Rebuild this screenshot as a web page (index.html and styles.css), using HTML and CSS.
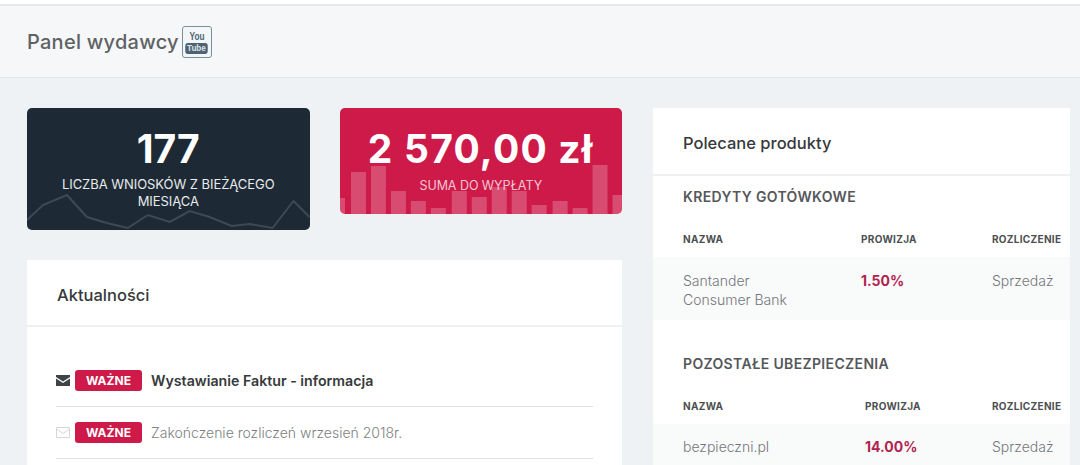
FILE: index.html
```html
<!DOCTYPE html>
<html lang="pl">
<head>
    <meta charset="UTF-8">
    <meta name="viewport" content="width=device-width, initial-scale=1.0">
    <title>Panel wydawcy</title>
    <link rel="stylesheet" href="styles.css">
</head>
<body>
    <div class="top-strip"></div>
    <header class="page-header">
        <h1>Panel wydawcy</h1>
        <a class="yt-button" href="#" aria-label="YouTube">
            <span class="yt-you">You</span>
            <span class="yt-tube">Tube</span>
        </a>
    </header>

    <main class="content">
        <div class="left-column">
            <div class="stats">
                <div class="stat-card stat-dark">
                    <svg class="stat-chart" viewBox="0 0 283 122" preserveAspectRatio="none">
                        <polyline points="0,112 16,97 40,87 60,109 80,115 101,120 121,107 143,114 163,103 183,109 205,118 223,116 246,120 267,93 283,109" fill="none" stroke="#3d4a55" stroke-width="2"/>
                    </svg>
                    <div class="stat-value">177</div>
                    <div class="stat-label">LICZBA WNIOSKÓW Z BIEŻĄCEGO MIESIĄCA</div>
                </div>
                <div class="stat-card stat-red">
                    <svg class="stat-chart" viewBox="0 0 283 106" preserveAspectRatio="none">
                        <g fill="#fff" fill-opacity="0.22">
                            <rect x="0" y="90" width="5" height="16"/>
                            <rect x="11" y="64" width="15" height="42"/>
                            <rect x="31" y="58" width="15" height="48"/>
                            <rect x="51" y="83" width="15" height="23"/>
                            <rect x="71" y="93" width="15" height="13"/>
                            <rect x="91" y="100" width="15" height="6"/>
                            <rect x="112" y="83" width="15" height="23"/>
                            <rect x="132" y="89" width="15" height="17"/>
                            <rect x="152" y="79" width="15" height="27"/>
                            <rect x="172" y="83" width="15" height="23"/>
                            <rect x="192" y="97" width="15" height="9"/>
                            <rect x="213" y="93" width="15" height="13"/>
                            <rect x="233" y="100" width="15" height="6"/>
                            <rect x="253" y="57" width="15" height="49"/>
                            <rect x="273" y="87" width="10" height="19"/>
                        </g>
                    </svg>
                    <div class="stat-value">2 570,00 zł</div>
                    <div class="stat-label">SUMA DO WYPŁATY</div>
                </div>
            </div>

            <section class="panel news">
                <h2 class="panel-title">Aktualności</h2>
                <ul class="news-list">
                    <li class="news-item unread">
                        <svg class="mail-icon" viewBox="0 0 14 11">
                            <path d="M0 0h14v2L7 6.5 0 2z" fill="#3f4347"/>
                            <path d="M0 3.4 7 8l7-4.6V11H0z" fill="#3f4347"/>
                        </svg>
                        <span class="badge">WAŻNE</span>
                        <a href="#">Wystawianie Faktur - informacja</a>
                    </li>
                    <li class="news-item">
                        <svg class="mail-icon" viewBox="0 0 14 11">
                            <path d="M.5.5h13v10H.5z" fill="none" stroke="#d4d6d8"/>
                            <path d="M.5 2 7 6.5 13.500 2" fill="none" stroke="#d4d6d8"/>
                        </svg>
                        <span class="badge">WAŻNE</span>
                        <a href="#">Zakończenie rozliczeń wrzesień 2018r.</a>
                    </li>
                </ul>
            </section>
        </div>

        <section class="panel products">
            <h2 class="panel-title">Polecane produkty</h2>

            <div class="product-group group-first">
                <h3>KREDYTY GOTÓWKOWE</h3>
                <div class="product-row product-head">
                    <div class="col-name">NAZWA</div>
                    <div class="col-rate">PROWIZJA</div>
                    <div class="col-type">ROZLICZENIE</div>
                </div>
                <div class="product-row product-body">
                    <div class="col-name">Santander<br>Consumer Bank</div>
                    <div class="col-rate rate">1.50%</div>
                    <div class="col-type">Sprzedaż</div>
                </div>
            </div>

            <div class="product-group group-second">
                <h3>POZOSTAŁE UBEZPIECZENIA</h3>
                <div class="product-row product-head">
                    <div class="col-name">NAZWA</div>
                    <div class="col-rate">PROWIZJA</div>
                    <div class="col-type">ROZLICZENIE</div>
                </div>
                <div class="product-row product-body">
                    <div class="col-name">bezpieczni.pl</div>
                    <div class="col-rate rate">14.00%</div>
                    <div class="col-type">Sprzedaż</div>
                </div>
            </div>
        </section>
    </main>
</body>
</html>
```

FILE: styles.css
```css
html, body {
    height: 100%;
}
body {
    margin: 0;
    overflow: hidden;
    background-color: #eff2f4;
    font-family: Inter, "Noto Sans", sans-serif;
    color: #3c4043;
}
h1, h2, h3, ul {
    margin: 0;
    padding: 0;
}
a {
    color: inherit;
    text-decoration: none;
}

/* Header */
.top-strip {
    height: 4px;
    background-color: #fff;
}
.page-header {
    display: flex;
    align-items: center;
    gap: 3px;
    height: 71px;
    padding-left: 27px;
    background-color: #f5f7f8;
    border-top: 2px solid #e6e9ea;
    border-bottom: 1px solid #e3e6e8;
}
.page-header h1 {
    font-size: 20px;
    font-weight: 500;
    letter-spacing: 0.25px;
    color: #5f6264;
}
.yt-button {
    display: flex;
    flex-direction: column;
    align-items: center;
    width: 30px;
    height: 32px;
    box-sizing: border-box;
    padding-top: 4px;
    background-color: #f3f6f8;
    border: 1px solid #7d8f99;
    border-radius: 3px;
    font-family: "Liberation Sans", sans-serif;
    font-weight: bold;
    color: #4f6472;
    line-height: 1;
}
.yt-you {
    font-size: 11px;
    transform: scaleX(0.75);
}
.yt-tube {
    margin-top: 1px;
    padding: 1px 2px;
    background-color: #4f6472;
    border-radius: 3px;
    color: #dfe5e8;
    font-size: 9px;
    transform: scaleX(0.9);
}

/* Layout */
.content {
    display: flex;
    gap: 31px;
    padding: 30px 10px 0 27px;
}
.left-column {
    width: 595px;
    flex-shrink: 0;
}
.stats {
    display: flex;
    align-items: flex-start;
    gap: 30px;
    margin-bottom: 30px;
}

/* Stat cards */
.stat-card {
    position: relative;
    flex: 1;
    border-radius: 5px;
    overflow: hidden;
    color: #fff;
    text-align: center;
}
.stat-dark {
    height: 122px;
    background-color: #1d2a35;
}
.stat-red {
    height: 106px;
    background-color: #ce1a49;
}
.stat-chart {
    position: absolute;
    left: 0;
    top: 0;
    width: 100%;
    height: 100%;
}
.stat-value {
    position: relative;
    margin-top: 19px;
    font-size: 39px;
    line-height: 44px;
    font-weight: 700;
}
.stat-red .stat-value {
    letter-spacing: 1.2px;
}
.stat-label {
    position: relative;
    margin: 5px auto 0;
    width: 240px;
    font-size: 13px;
    letter-spacing: -0.05px;
    line-height: 17px;
    color: #e8eaec;
}
.stat-red .stat-label {
    color: #f6c5d2;
    margin-top: 6px;
    font-size: 12.500px;
}

/* Panels */
.panel {
    background-color: #fff;
}
.panel-title {
    padding-left: 30px;
    font-size: 16.500px;
    font-weight: 500;
    color: #36393b;
    border-bottom: 2px solid #eef0f2;
}
.news {
    height: 220px;
}
.news .panel-title {
    height: 65px;
    line-height: 71px;
}
.products {
    flex: 1;
    height: 357px;
}
.products .panel-title {
    height: 66px;
    line-height: 71px;
}

/* News */
.news-list {
    list-style: none;
    padding: 28px 29px 0;
}
.news-item {
    display: flex;
    align-items: center;
    height: 52px;
    box-sizing: border-box;
    border-bottom: 1px solid #dfe1e3;
    font-size: 14px;
    font-weight: 300;
    color: #7c7f81;
}
.news-item.unread {
    color: #36393b;
    font-size: 14.200px;
    font-weight: 600;
}
.mail-icon {
    width: 14px;
    height: 11px;
    margin-right: 5px;
}
.badge {
    margin-right: 9px;
    width: 67px;
    height: 21px;
    line-height: 21px;
    text-align: center;
    background-color: #ce1a49;
    border-radius: 3px;
    color: #fff;
    font-size: 12px;
    font-weight: 700;
}

/* Products */
.product-group h3 {
    padding-left: 30px;
    font-size: 14px;
    font-weight: 600;
    color: #55585a;
    letter-spacing: 0.35px;
    line-height: 18px;
}
.group-first {
    padding-top: 12px;
}
.group-second {
    padding-top: 35px;
}
.product-row {
    display: flex;
    padding-left: 30px;
}
.product-head {
    height: 24px;
    padding-top: 27px;
    font-size: 10px;
    font-weight: 700;
    line-height: 12px;
    color: #4c4f51;
    letter-spacing: 0.3px;
}
.product-body {
    height: 63px;
    padding-top: 14px;
    box-sizing: border-box;
    background-color: #f9fafa;
    font-size: 14px;
    font-weight: 300;
    line-height: 19px;
    color: #74777a;
}
.group-second .product-body {
    padding-top: 13px;
}
.col-name {
    width: 178px;
}
.group-second .col-name {
    width: 182px;
}
.col-rate {
    width: 131px;
}
.group-second .col-rate {
    width: 127px;
}
.rate {
    color: #b3234f;
    font-weight: 700;
}
```
